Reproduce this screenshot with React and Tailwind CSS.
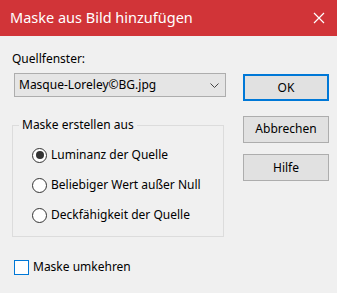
import React, { useState } from 'react';

const font = { fontFamily: '"Noto Sans", "Open Sans", Arial, sans-serif' };

const Radio = ({ checked, label, onClick }) => (
    <div className="flex h-[30px] items-center gap-[4px] cursor-default" onClick={onClick}>
        <span className="flex h-[15px] w-[15px] items-center justify-center rounded-full border border-[#333333] bg-white">
            {checked && <span className="h-[8px] w-[8px] rounded-full bg-[#333333]" />}
        </span>
        <span className="text-[12px] leading-[16px] text-black">{label}</span>
    </div>
);

const Button = ({ children, primary }) => (
    <button
        className={
            primary
                ? 'h-[27px] w-[86px] border-2 border-[#0078d7] bg-[#e1e1e1] text-[12px] text-black'
                : 'h-[27px] w-[86px] border border-[#adadad] bg-[#e1e1e1] text-[12px] text-black'
        }
    >
        {children}
    </button>
);

export default function App() {
    const [mode, setMode] = useState(0);
    const [invert, setInvert] = useState(false);

    const modes = ['Luminanz der Quelle', 'Beliebiger Wert außer Null', 'Deckfähigkeit der Quelle'];

    return (
        <div className="h-[293px] w-[337px] overflow-hidden bg-[#f0f0f0]" style={font}>
            {/* Titelleiste */}
            <div className="flex h-[36px] items-center justify-between bg-[#d13438] pl-[10px] pr-[11px]">
                <span className="text-[14.5px] text-white">Maske aus Bild hinzufügen</span>
                <svg width="12" height="12" viewBox="0 0 12 12" className="mr-[1px]">
                    <path d="M1 1 L11 11 M11 1 L1 11" stroke="white" strokeWidth="1.2" />
                </svg>
            </div>

            <div className="flex">
                {/* Linke Spalte */}
                <div className="w-[231px] pl-[12px]">
                    <div className="mt-[15px] text-[12px] leading-[16px] text-black">Quellfenster:</div>
                    <div className="ml-[2px] mt-[6px] flex h-[24px] w-[212px] items-center justify-between border border-[#adadad] bg-[#e5e5e5] pl-[4px] pr-[6px]">
                        <span className="text-[12px] text-black">Masque-Loreley©BG.jpg</span>
                        <svg width="9" height="5" viewBox="0 0 9 5">
                            <path d="M0.5 0.5 L4.5 4.5 L8.5 0.5" stroke="#444" fill="none" strokeWidth="1" />
                        </svg>
                    </div>

                    <fieldset className="mt-[20px] h-[120px] w-[212px] border border-[#dcdcdc]">
                        <legend className="ml-[6px] px-[3px] text-[12px] leading-[16px] text-black">
                            Maske erstellen aus
                        </legend>
                        <div className="pl-[19px] pt-[7px]">
                            {modes.map((m, i) => (
                                <Radio key={m} label={m} checked={mode === i} onClick={() => setMode(i)} />
                            ))}
                        </div>
                    </fieldset>

                    <div
                        className="ml-[2px] mt-[22px] flex items-center gap-[4px] cursor-default"
                        onClick={() => setInvert(!invert)}
                    >
                        <span className="flex h-[15px] w-[15px] items-center justify-center border border-[#0078d7] bg-white">
                            {invert && (
                                <svg width="11" height="11" viewBox="0 0 11 11">
                                    <path d="M1.5 5.5 L4.5 8.5 L9.5 2" stroke="#333" fill="none" strokeWidth="1.3" />
                                </svg>
                            )}
                        </span>
                        <span className="text-[12px] leading-[16px] text-black">Maske umkehren</span>
                    </div>
                </div>

                {/* Rechte Spalte: Buttons */}
                <div className="ml-[12px] mt-[38px] flex flex-col">
                    <Button primary>OK</Button>
                    <div className="mt-[14px]">
                        <Button>Abbrechen</Button>
                    </div>
                    <div className="mt-[11px]">
                        <Button>Hilfe</Button>
                    </div>
                </div>
            </div>
        </div>
    );
}
